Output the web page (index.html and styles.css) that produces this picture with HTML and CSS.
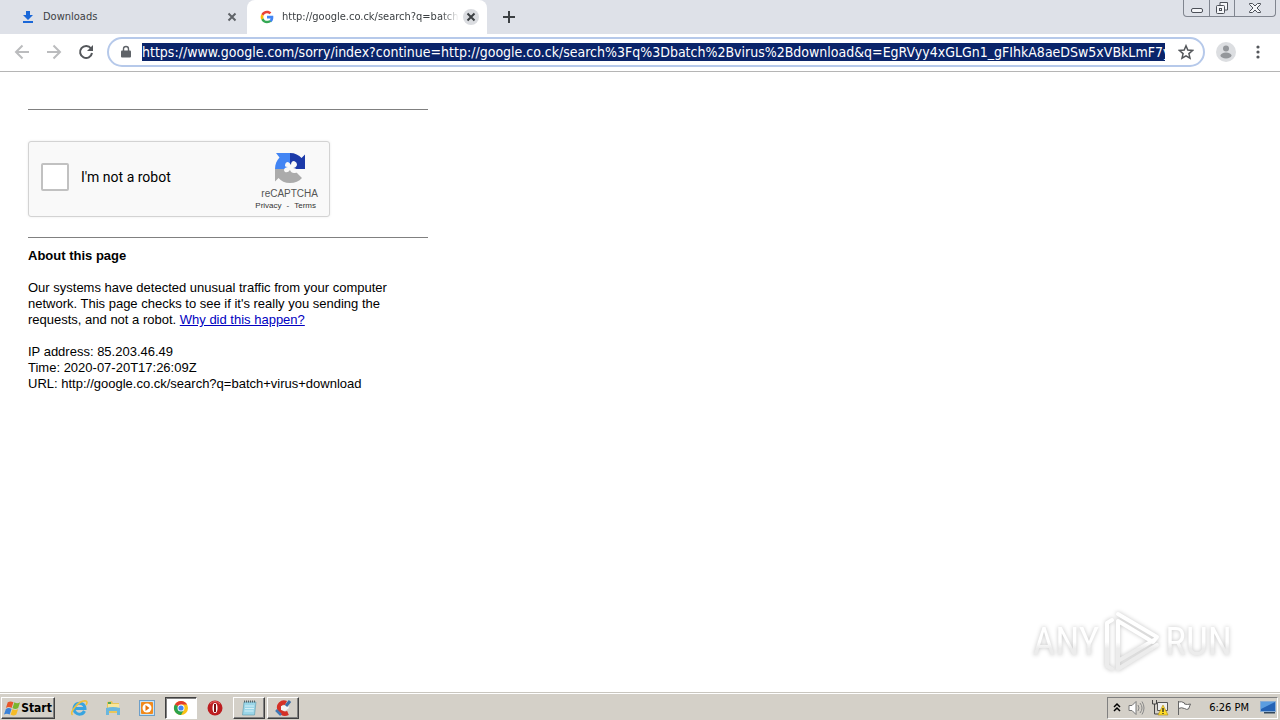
FILE: index.html
```html
<!DOCTYPE html>
<html lang="en">
<head>
<meta charset="utf-8">
<meta name="viewport" content="width=device-width, initial-scale=1">
<title>http://google.co.ck/search?q=batch+virus+download</title>
<link rel="stylesheet" href="styles.css">
</head>
<body>
<header class="browser">
  <div class="tabstrip">
    <div class="tab">
      <svg class="favicon" viewBox="0 0 16 16"><path fill="#1a67d8" d="M6 2h4v4h3l-5 5-5-5h3zM3 12h10v2H3z"/></svg>
      <span class="tab-title">Downloads</span>
      <button class="tab-close" aria-label="Close Downloads"><svg viewBox="0 0 16 16"><path d="M4.500 4.500l7 7m0-7l-7 7"/></svg></button>
    </div>
    <div class="tab tab-active">
      <svg class="favicon" viewBox="0 0 48 48"><path fill="#ea4335" d="M24 13c3 0 5.500 1 7.500 3l5.600-5.600C33.700 7 29.200 5 24 5 16.500 5 10.100 9.300 7 15.500l6.500 5C15 16.100 19.100 13 24 13z"/><path fill="#4285f4" d="M43 24.500c0-1.500-.1-2.700-.4-4H24v8h10.700c-.5 2.600-2 4.700-4.200 6.100l6.500 5c3.800-3.500 6-8.700 6-15.100z"/><path fill="#fbbc05" d="M13.500 27.500c-.8-2.300-.8-4.700 0-7l-6.500-5c-2.700 5.400-2.700 11.600 0 17z"/><path fill="#34a853" d="M24 43c5.200 0 9.600-1.700 13-4.400l-6.500-5c-1.800 1.200-4.100 1.900-6.500 1.900-4.900 0-9-3.300-10.500-8L7 32.500C10.100 38.700 16.500 43 24 43z"/></svg>
      <span class="tab-title tab-title-fade">http://google.co.ck/search?q=batch</span>
      <button class="tab-close tab-close-round" aria-label="Close tab"><svg viewBox="0 0 16 16"><path d="M4.500 4.500l7 7m0-7l-7 7"/></svg></button>
    </div>
    <button class="new-tab" aria-label="New tab"><svg viewBox="0 0 16 16"><path d="M8 2v12M2 8h12"/></svg></button>
    <div class="window-controls">
      <button aria-label="Minimize"><svg viewBox="0 0 16 16"><rect x="2.500" y="8.500" width="11" height="4" rx="1.500"/></svg></button>
      <button aria-label="Restore"><svg viewBox="0 0 16 16"><path d="M6 5V2.500h7.500V10H11"/><rect x="2.500" y="5.500" width="8" height="8" rx="1"/><rect x="5.500" y="8.500" width="2" height="2"/></svg></button>
      <button class="window-close" aria-label="Close window"><svg viewBox="0 0 16 16"><path d="M2.500 3.500h3L8 6l2.500-2.500h3v1L10 8l3.500 3.500v1h-3L8 10l-2.500 2.500h-3v-1L6 8 2.500 4.500z"/></svg></button>
    </div>
  </div>
  <div class="toolbar">
    <button class="nav nav-off" aria-label="Back"><svg viewBox="0 0 16 16"><path d="M15 8H2m6.500-6.500L2 8l6.500 6.500"/></svg></button>
    <button class="nav nav-off" aria-label="Forward"><svg viewBox="0 0 16 16"><path d="M1 8h13M7.500 1.500L14 8l-6.500 6.500"/></svg></button>
    <button class="nav" aria-label="Reload"><svg viewBox="0 0 16 16"><path d="M13 4.500A6 6 0 1 0 14 9"/><path class="solid" d="M15 1v6H9z"/></svg></button>
    <div class="omnibox">
      <svg class="lock" viewBox="0 0 12 14"><path fill="#5f6368" d="M2 5.500h8q1 0 1 1v5q0 1-1 1H2q-1 0-1-1v-5q0-1 1-1z"/><path fill="none" stroke="#5f6368" stroke-width="1.400" d="M3.500 6V4a2.500 2.500 0 0 1 5 0v2"/></svg>
      <input class="url" aria-label="Address" value="https://www.google.com/sorry/index?continue=http://google.co.ck/search%3Fq%3Dbatch%2Bvirus%2Bdownload&amp;q=EgRVyy4xGLGn1_gFIhkA8aeDSw5xVBkLmF7y">
      <button class="star" aria-label="Bookmark"><svg viewBox="0 0 16 16"><path d="M8 1.800l1.800 4.300 4.700.4-3.600 3.100 1.100 4.600L8 11.800l-4 2.400 1.100-4.600-3.600-3.100 4.700-.4z"/></svg></button>
    </div>
    <button class="profile" aria-label="Profile"><svg viewBox="0 0 20 20"><circle cx="10" cy="10" r="10" fill="#dcdee1"/><circle cx="10" cy="6.500" r="3" fill="#94979b"/><ellipse cx="10" cy="13.500" rx="5.500" ry="3" fill="#94979b"/></svg></button>
    <button class="menu" aria-label="Menu"><svg viewBox="0 0 4 16"><circle cx="2" cy="3" r="1.600"/><circle cx="2" cy="8" r="1.600"/><circle cx="2" cy="13" r="1.600"/></svg></button>
  </div>
</header>

<main class="page">
  <div class="column">
    <hr>
    <div class="captcha">
      <label class="captcha-check"><input type="checkbox"><span>I'm not a robot</span></label>
      <div class="captcha-brand">
        <svg class="captcha-logo" viewBox="0 0 32 32"><path fill="#1c3aa9" d="M16 1c5 0 9 2 11.500 5L31 2.500V17H16z"/><path fill="#4285f4" d="M16 1v16H1c0-5 2-9 4.500-11.500L2 1z"/><path fill="#ababab" d="M1 17h16l6 4 5 5C25 29.500 21 31 16 31c-5 0-9-2-11.500-5L1 29.500z"/><path fill="#f9f9f9" d="M11 14q0-4 3-4 2 1 3 3 0-4 3-4 3 1 3 4-1 3-4 3 4 0 4 3 0 2-3 2-3 0-4-3-2 3-5 2-2-2 0-4 2-1 3-1-3 0-3-1z"/></svg>
        <div class="captcha-name">reCAPTCHA</div>
        <div class="captcha-links"><a href="#">Privacy</a><span>-</span><a href="#">Terms</a></div>
      </div>
    </div>
    <hr>
    <section class="about">
      <strong>About this page</strong>
      <p>Our systems have detected unusual traffic from your computer<br>network. This page checks to see if it's really you sending the<br>requests, and not a robot. <a href="#">Why did this happen?</a></p>
      <p>IP address: 85.203.46.49<br>Time: 2020-07-20T17:26:09Z<br>URL: http://google.co.ck/search?q=batch+virus+download</p>
    </section>
  </div>
  <div class="watermark">
    <span>ANY</span>
    <svg viewBox="0 0 58 64"><defs><linearGradient id="fade" gradientUnits="userSpaceOnUse" x1="0" y1="0" x2="0" y2="64"><stop offset=".5" stop-color="#fff"/><stop offset=".6" stop-color="#ececec"/></linearGradient></defs><path stroke="url(#fade)" d="M15 4L54 27l-4 5L15 11v40l36-21M9 10L4 13v43l5 3M15 51v8l39-24"/></svg>
    <span>RUN</span>
  </div>
</main>

<footer class="taskbar">
  <button class="start"><svg viewBox="0 0 18 16"><path fill="#e8562a" d="M4 2q3-2 6 0L8 8Q5 6 2 8z"/><path fill="#7ab52c" d="M11 2q3 2 6 0l-2 6q-3 2-6 0z"/><path fill="#3b82d8" d="M2 9q3-2 6 0l-2 6q-3-2-6 0z"/><path fill="#f5bb28" d="M9 9q3 2 6 0l-2 6q-3 2-6 0z"/></svg>Start</button>
  <nav class="launch">
    <button aria-label="Internet Explorer"><svg viewBox="0 0 18 18"><path fill="none" stroke="#38a4e0" stroke-width="3" d="M14.500 12A5.500 5.500 0 1 1 15 9.500H5"/><path fill="none" stroke="#efc039" stroke-width="1.600" d="M2.500 16Q0 14 5 8q6-7 11-6 2 1 0 4"/></svg></button>
    <button aria-label="Explorer"><svg viewBox="0 0 18 18"><path fill="#e8c65b" d="M3 3l5-1 1 2h6v10H3z"/><path fill="#f8e69b" d="M4 5h11v6H4z"/><path fill="#6ab7de" d="M2 9q7-2 14 0v7h-3v-4H5v4H2z"/><path fill="#55a854" d="M4 3h3v2H4z"/></svg></button>
    <button aria-label="Media Player"><svg viewBox="0 0 18 18"><rect x="1.500" y="1.500" width="15" height="15" fill="#c7e2f5" stroke="#6d9fc9"/><rect x="3" y="3" width="12" height="12" rx="1" fill="#f18a1d"/><circle cx="9" cy="9" r="4.500" fill="#fff"/><path fill="#e5720c" d="M7.500 6l4 3-4 3z"/></svg></button>
    <button class="pressed" aria-label="Chrome"><svg viewBox="0 0 18 18"><circle cx="9" cy="9" r="7" fill="#fbc116"/><path fill="#e33b2e" d="M9 9L2.900 5.500A7 7 0 0 1 15.100 5.500H9z"/><path fill="#2ba24c" d="M9 9L2.900 5.500A7 7 0 0 0 9 16l3-5.200z"/><circle cx="9" cy="9" r="3.500" fill="#fff"/><circle cx="9" cy="9" r="2.600" fill="#4285f4"/></svg></button>
    <button aria-label="Opera"><svg viewBox="0 0 18 18"><circle cx="9" cy="9" r="7.500" fill="#bd1d20"/><path fill="none" stroke="#e9696a" d="M4 5q5-5 10 0"/><ellipse cx="9" cy="9" rx="2.500" ry="5" fill="#fff"/><path fill="#7a0d10" d="M8 5h2v8H8z"/></svg></button>
    <button class="raised" aria-label="Notepad"><svg viewBox="0 0 18 18"><path fill="#9bd6e8" stroke="#5d98ad" stroke-width=".6" d="M4 3h12l-1.500 13H2.500z"/><path stroke="#d5f0f7" d="M5 7h9M5 9.500h9M4.500 12h9"/><path stroke="#54636a" stroke-dasharray="1 1" stroke-width="2" d="M4 2.500h12"/></svg></button>
    <button class="raised" aria-label="CCleaner"><svg viewBox="0 0 18 18"><path fill="none" stroke="#d43127" stroke-width="4.500" d="M12 4Q9 2.500 6.500 5T6 12q3 4 8 2"/><path fill="#f4f4f4" d="M7 7l7-1 1 3-4 3-4-1z"/><path stroke="#3c6ea5" stroke-width="3" d="M16 2l-4 5"/><path stroke="#3f78b6" stroke-width="2.500" d="M2 11l5 5"/></svg></button>
  </nav>
  <div class="tray">
    <svg class="chevrons" viewBox="0 0 8 12"><path fill="none" stroke="#000" stroke-width="1.500" d="M1 5l3-3 3 3M1 9l3-3 3 3"/></svg>
    <svg viewBox="0 0 18 18"><path fill="#fff" stroke="#777" d="M2 6.500h3l4-4v13l-4-4H2z"/><path fill="none" stroke="#888" d="M11 6q2 3 0 6M13 4q4 5 0 10M15 2.500q4 6.500 0 13"/></svg>
    <svg viewBox="0 0 18 18"><path fill="#eee" stroke="#555" d="M6.500 3.500h10v8h-10z"/><path fill="none" stroke="#444" d="M1.500 1v4h4V1M3.500 5v10h8"/><path fill="#ffdc28" stroke="#a88614" stroke-width=".6" d="M12 6l5 10H7z"/><path stroke="#222" stroke-width="1.300" d="M12 9v4m0 1v1"/></svg>
    <svg viewBox="0 0 18 18"><path fill="#fff" stroke="#666" d="M3.500 2v14M3.500 3q3-1 6 1v1q3 1 6 0l-2 5q-2 1-4-.5-3-1.500-6 0"/></svg>
    <time class="clock">6:26 PM</time>
    <svg viewBox="0 0 18 18"><path fill="#2462b5" stroke="#87acd5" d="M1.500 2.500h15v10h-15z"/><path fill="#5b9de0" d="M2 3h14L2 10z"/><path fill="#33485d" d="M5 13h11v1.500H5z"/></svg>
  </div>
</footer>
</body>
</html>
```
FILE: styles.css
```css
* { box-sizing: border-box; }
body {
  margin: 0;
  min-height: 100vh;
  display: flex;
  flex-direction: column;
  background: #fff;
  color: #000;
  font-family: "Liberation Sans", Arial, sans-serif;
  font-size: 13px;
  line-height: 16px;
}
button { border: 0; padding: 0; background: none; color: inherit; font: inherit; display: flex; align-items: center; justify-content: center; }
svg { display: block; flex: none; }

.browser, .taskbar { font-family: Tahoma, "DejaVu Sans Condensed", "DejaVu Sans", sans-serif; }
.browser { border-bottom: 1px solid #b5b5b5; }

.tabstrip { display: flex; height: 34px; background: #dee1e8; padding-left: 7px; }
.tab { display: flex; align-items: center; width: 240px; padding: 0 7px 0 13px; font-size: 11px; color: #3c4043; }
.tab-active { background: #fff; border-radius: 8px 8px 0 0; padding: 0 8px 0 12px; }
.favicon { width: 16px; height: 16px; margin-right: 7px; }
.tab-title { flex: 1; white-space: nowrap; }
.tab-title-fade { mask-image: linear-gradient(to right, #000 90%, transparent); margin-right: 4px; }
.tab-close { width: 16px; height: 16px; border-radius: 50%; }
.tab-close svg { width: 16px; height: 16px; fill: none; stroke: #5f6368; stroke-width: 2; }
.tab-close-round { background: #dadce0; }
.tab-close-round svg { stroke: #3c4043; }
.new-tab { width: 44px; }
.new-tab svg { width: 16px; height: 16px; stroke: #3c4043; stroke-width: 2; }

.window-controls { display: flex; align-self: flex-start; margin: 0 4px 0 auto; height: 17px; border: 1px solid #80858f; border-top: 0; border-radius: 0 0 4px 4px; }
.window-controls button { width: 25px; }
.window-controls button + button { border-left: 1px solid #80858f; }
.window-controls .window-close { width: 41px; }
.window-controls svg { width: 16px; height: 16px; fill: #f4f5f8; stroke: #4c5058; }

.toolbar { display: flex; align-items: center; height: 37px; padding: 0 14px 2px; }
.nav { width: 16px; height: 16px; margin-right: 16px; }
.nav svg { width: 16px; height: 16px; fill: none; stroke: #54575b; stroke-width: 2; }
.nav .solid { fill: #54575b; stroke: none; }
.nav-off svg { stroke: #bbbcbe; }
.omnibox { display: flex; align-items: center; flex: 1; min-width: 0; height: 30px; margin-left: -3px; padding: 0 9px 0 11px; border: 2px solid #b6c9ea; border-radius: 15px; }
.lock { width: 12px; height: 14px; margin-right: 10px; }
.url { flex: 1; min-width: 0; height: 18px; border: 0; padding: 0; outline: 0; background: #0a246a; color: #fff; font-family: Tahoma, "DejaVu Sans Condensed", "DejaVu Sans", sans-serif; font-size: 14px; line-height: 18px; }
.star { margin-left: 13px; }
.star svg { width: 16px; height: 16px; fill: none; stroke: #54575b; stroke-width: 1.5; }
.profile { margin-left: 11px; }
.profile svg { width: 20px; height: 20px; }
.menu { width: 4px; margin: 0 6px 0 20px; }
.menu svg { width: 4px; height: 16px; fill: #54575b; }

.page { position: relative; flex: 1; padding: 37px 28px 0; }
.column { max-width: 400px; }
hr { border: 0; margin: 0; height: 1px; background: #808080; }
.captcha { display: flex; justify-content: space-between; width: 302px; height: 76px; margin: 31px 0 20px; padding: 0 11px 0 12px; border: 1px solid #d3d3d3; border-radius: 3px; background: #f9f9f9; box-shadow: 0 0 3px rgba(0, 0, 0, .08); }
.captcha-check { display: flex; align-items: center; gap: 12px; font-family: Roboto, sans-serif; font-size: 14px; padding-bottom: 4px; }
.captcha-check input { appearance: none; width: 28px; height: 28px; margin: 0; border: 2px solid #c1c1c1; border-radius: 2px; background: #fff; }
.captcha-brand { display: flex; flex-direction: column; align-items: flex-end; color: #555; }
.captcha-logo { width: 32px; height: 32px; margin: 10px 12px 4px 0; }
.captcha-name { font-size: 10px; line-height: 12px; }
.captcha-links { display: flex; gap: 5px; padding-right: 2px; font-size: 8px; line-height: 12px; color: #333; }
.captcha-links a { color: inherit; text-decoration: none; }
.about { padding-top: 10px; }
.about strong { display: block; }
.about p { margin: 16px 0 0; white-space: nowrap; }
.about a { color: #0000c0; }

.watermark { position: absolute; right: 48px; bottom: 18px; display: flex; align-items: center; color: #fff; font-family: "Roboto Condensed", "Liberation Sans Narrow", "Open Sans Condensed", Roboto, sans-serif; font-size: 39px; line-height: 64px; filter: drop-shadow(0 0 2px #c4c4c4); pointer-events: none; }
.watermark span { background: linear-gradient(#fff 50%, #ececec 60%); background-clip: text; color: transparent; }
.watermark svg { width: 58px; height: 64px; margin: 0 4px; fill: none; stroke-width: 4; stroke-linejoin: round; stroke-linecap: round; }

.taskbar { display: flex; align-items: center; height: 28px; padding: 2px 1px 0; background: #d4d0c8; border-top: 1px solid #c9c6bf; box-shadow: inset 0 1px #fff; font-size: 11px; }
.start, .raised { border: 1px solid; border-color: #fff #404040 #404040 #fff; box-shadow: inset -1px -1px #808080; }
.start { height: 22px; width: 54px; gap: 0; font-weight: bold; font-size: 12px; }
.start svg { width: 17px; height: 16px; }
.launch { display: flex; align-items: center; margin-left: 8px; gap: 2px; }
.launch button { width: 32px; height: 22px; }
.launch svg { width: 18px; height: 18px; }
.launch .pressed { background: #fff; border: 1px solid; border-color: #404040 #fff #fff #404040; box-shadow: inset 1px 1px #808080; }
.tray { display: flex; align-items: center; gap: 6px; height: 22px; margin: 0 1px 0 auto; padding: 0 0 0 5px; border: 1px solid; border-color: #808080 #fff #fff #808080; }
.tray svg { width: 18px; height: 18px; }
.tray .chevrons { width: 8px; height: 12px; }
.clock { margin: 0 4px 0 10px; }
```
